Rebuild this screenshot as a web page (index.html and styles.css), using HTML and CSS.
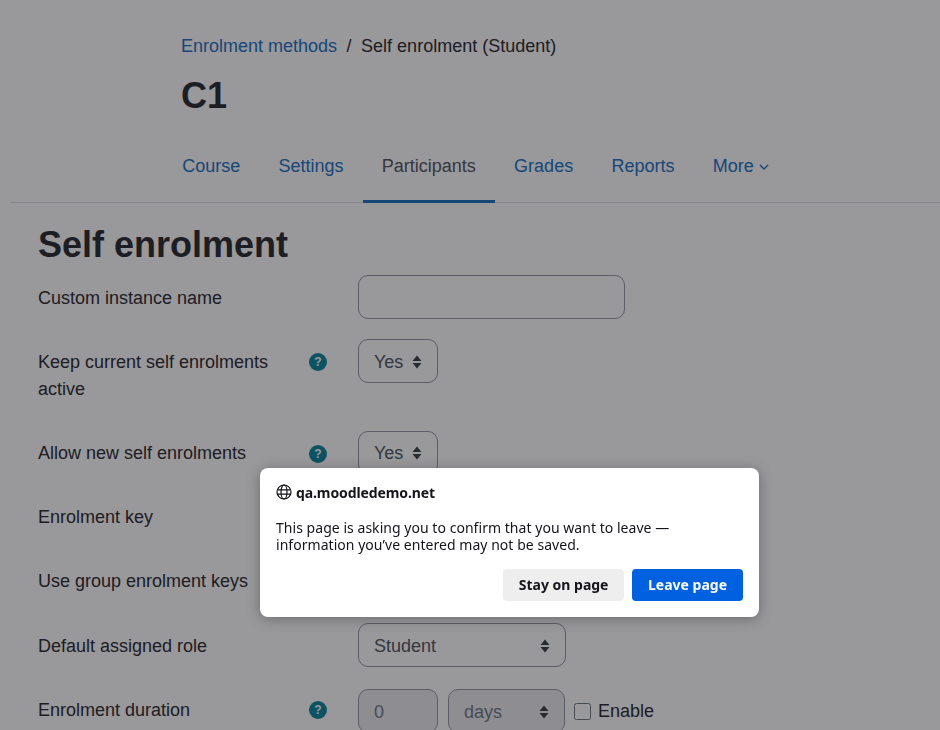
FILE: index.html
```html
<!DOCTYPE html>
<html lang="en">
<head>
<meta charset="utf-8">
<title>Self enrolment</title>
<link rel="stylesheet" href="styles.css">
</head>
<body>
<div class="page">
  <header class="head">
    <nav class="crumbs"><a href="#">Enrolment methods</a><span class="sep">/</span><span>Self enrolment (Student)</span></nav>
    <h1 class="course">C1</h1>
    <ul class="tabs">
      <li><a class="tab" href="#">Course</a></li>
      <li><a class="tab" href="#">Settings</a></li>
      <li><a class="tab active" href="#">Participants</a></li>
      <li><a class="tab" href="#">Grades</a></li>
      <li><a class="tab" href="#">Reports</a></li>
      <li><a class="tab" href="#">More<svg class="chev" viewBox="0 0 10 6" width="10" height="6"><path d="M1 1l4 4 4-4" fill="none" stroke="currentColor" stroke-width="1.4"/></svg></a></li>
    </ul>
  </header>
  <main class="content">
    <h2 class="title">Self enrolment</h2>
    <form class="form">
      <div class="row low"><div class="lab">Custom instance name</div><div class="help"></div><div class="ctl"><div class="field text"></div></div></div>
      <div class="row tall low"><div class="lab">Keep current self enrolments active</div><div class="help"><span class="q">?</span></div><div class="ctl"><div class="field sel yes">Yes<svg class="updown" viewBox="0 0 10 16" width="10" height="16"><path d="M5 1.500l4.500 5.500h-9zM5 14.500l-4.500-5.500h9z" fill="#343a40"/></svg></div></div></div>
      <div class="row"><div class="lab">Allow new self enrolments</div><div class="help"><span class="q">?</span></div><div class="ctl"><div class="field sel yes">Yes<svg class="updown" viewBox="0 0 10 16" width="10" height="16"><path d="M5 1.500l4.500 5.500h-9zM5 14.500l-4.500-5.500h9z" fill="#343a40"/></svg></div></div></div>
      <div class="row"><div class="lab">Enrolment key</div><div class="help"></div><div class="ctl"><div class="field text"></div></div></div>
      <div class="row"><div class="lab">Use group enrolment keys</div><div class="help"></div><div class="ctl"><div class="field sel yes">No<svg class="updown" viewBox="0 0 10 16" width="10" height="16"><path d="M5 1.500l4.500 5.500h-9zM5 14.500l-4.500-5.500h9z" fill="#343a40"/></svg></div></div></div>
      <div class="row wide low"><div class="lab">Default assigned role</div><div class="help"></div><div class="ctl"><div class="field sel role">Student<svg class="updown" viewBox="0 0 10 16" width="10" height="16"><path d="M5 1.500l4.500 5.500h-9zM5 14.500l-4.500-5.500h9z" fill="#343a40"/></svg></div></div></div>
      <div class="row last"><div class="lab">Enrolment duration</div><div class="help"><span class="q">?</span></div><div class="ctl"><div class="field off num">0</div><div class="field off sel unit">days<svg class="updown" viewBox="0 0 10 16" width="10" height="16"><path d="M5 1.500l4.500 5.500h-9zM5 14.500l-4.500-5.500h9z" fill="#343a40"/></svg></div><label class="check"><span class="box"></span>Enable</label></div></div>
    </form>
  </main>
</div>
<div class="overlay"></div>
<div class="dialog" role="dialog">
  <div class="origin"><svg class="globe" viewBox="0 0 16 16" width="16" height="16" fill="none" stroke="#15141a" stroke-width="1.200"><circle cx="8" cy="8" r="7"/><ellipse cx="8" cy="8" rx="3" ry="7"/><path d="M1.300 5.800h13.400M1.300 10.200h13.400"/></svg><span>qa.moodledemo.net</span></div>
  <p class="msg">This page is asking you to confirm that you want to leave — information you’ve entered may not be saved.</p>
  <div class="actions"><button class="btn stay" type="button">Stay on page</button><button class="btn leave" type="button">Leave page</button></div>
</div>
</body>
</html>
```
FILE: styles.css
```css
* { box-sizing: border-box; }
html, body { margin: 0; height: 730px; overflow: hidden; }
body { background: #fff; color: #1d2125; font-family: "Liberation Sans", Arial, sans-serif; font-size: 18px; }
a { color: #0f6cbf; text-decoration: none; }
.page { height: 730px; overflow: hidden; }
.head { margin-left: 10px; padding: 34px 0 0 171px; border-bottom: 1px solid #dee2e6; height: 203px; }
.crumbs { display: flex; gap: 9.500px; line-height: 24px; font-size: 18px; }
.course { margin: 16px 0 0; font-size: 36px; line-height: 44px; font-weight: 700; }
.tabs { list-style: none; display: flex; margin: 19px 0 0 -18px; padding: 0; }
.tab { display: flex; align-items: center; height: 66px; padding: 0 19.150px 5px; border-bottom: 3px solid transparent; }
.tab.active { color: #495057; border-bottom-color: #0f6cbf; }
.chev { margin-left: 5px; margin-top: 2px; }
.content { padding: 19px 0 0 38px; }
.title { margin: 0 0 7px; font-size: 36px; line-height: 46px; font-weight: 700; }
.row { display: grid; grid-template-columns: 260px 60px 1fr; margin-bottom: 20px; height: 44px; }
.row.tall { height: 72px; }
.row.wide { margin-bottom: 22px; }
.lab { padding-top: 9px; line-height: 27px; padding-right: 10px; }
.low .lab { padding-top: 10px; }
.last .lab { padding-top: 8px; }
.help { padding-top: 14px; padding-left: 11px; }
.last .help { padding-top: 12px; }
.q { display: flex; align-items: center; justify-content: center; width: 18px; height: 18px; border-radius: 50%; background: #008196; color: #fff; font-size: 12px; font-weight: 700; }
.ctl { display: flex; gap: 10px; align-items: flex-start; }
.field { height: 44px; border: 1px solid #8f959e; border-radius: 10px; color: #495057; background: #fff; padding: 0 15px; display: flex; align-items: center; }
.low .field.sel, .last .field { padding-top: 2px; }
.text { width: 267px; }
.sel { justify-content: space-between; }
.yes { width: 80px; }
.role { width: 208px; }
.num { width: 80px; }
.unit { width: 117px; }
.off { background: #e9ecef; color: #6a737b; }
.updown { flex: none; }
.check { display: flex; align-items: center; height: 44px; margin-left: -1px; }
.box { width: 17px; height: 17px; border: 1.800px solid #6a737b; border-radius: 2.500px; margin-right: 7px; }
.overlay { position: fixed; inset: 0; background: rgba(28, 27, 34, 0.45); }
.dialog { position: fixed; left: 260px; top: 468px; width: 499px; height: 149px; background: #fff; border-radius: 8px; box-shadow: 0 2px 14px rgba(0, 0, 0, 0.3); padding: 16px; color: #15141a; font-family: "Noto Sans", sans-serif; font-size: 14px; }
.origin { display: flex; align-items: center; gap: 4px; font-weight: 700; height: 17px; letter-spacing: -0.1px; }
.globe { flex: none; margin-top: -1px; }
.msg { margin: 18px 0 0; line-height: 17px; max-width: 440px; letter-spacing: 0.04px; }
.actions { display: flex; justify-content: flex-end; gap: 8px; margin-top: 16px; }
.btn { height: 32px; border: 0; border-radius: 4px; font: 700 14px "Noto Sans", sans-serif; padding: 0 16px 2px; }
.stay { background: #eeeeef; color: #15141a; padding: 0 15.500px 2px; }
.leave { background: #0061e0; color: #fbfbfe; }
```
